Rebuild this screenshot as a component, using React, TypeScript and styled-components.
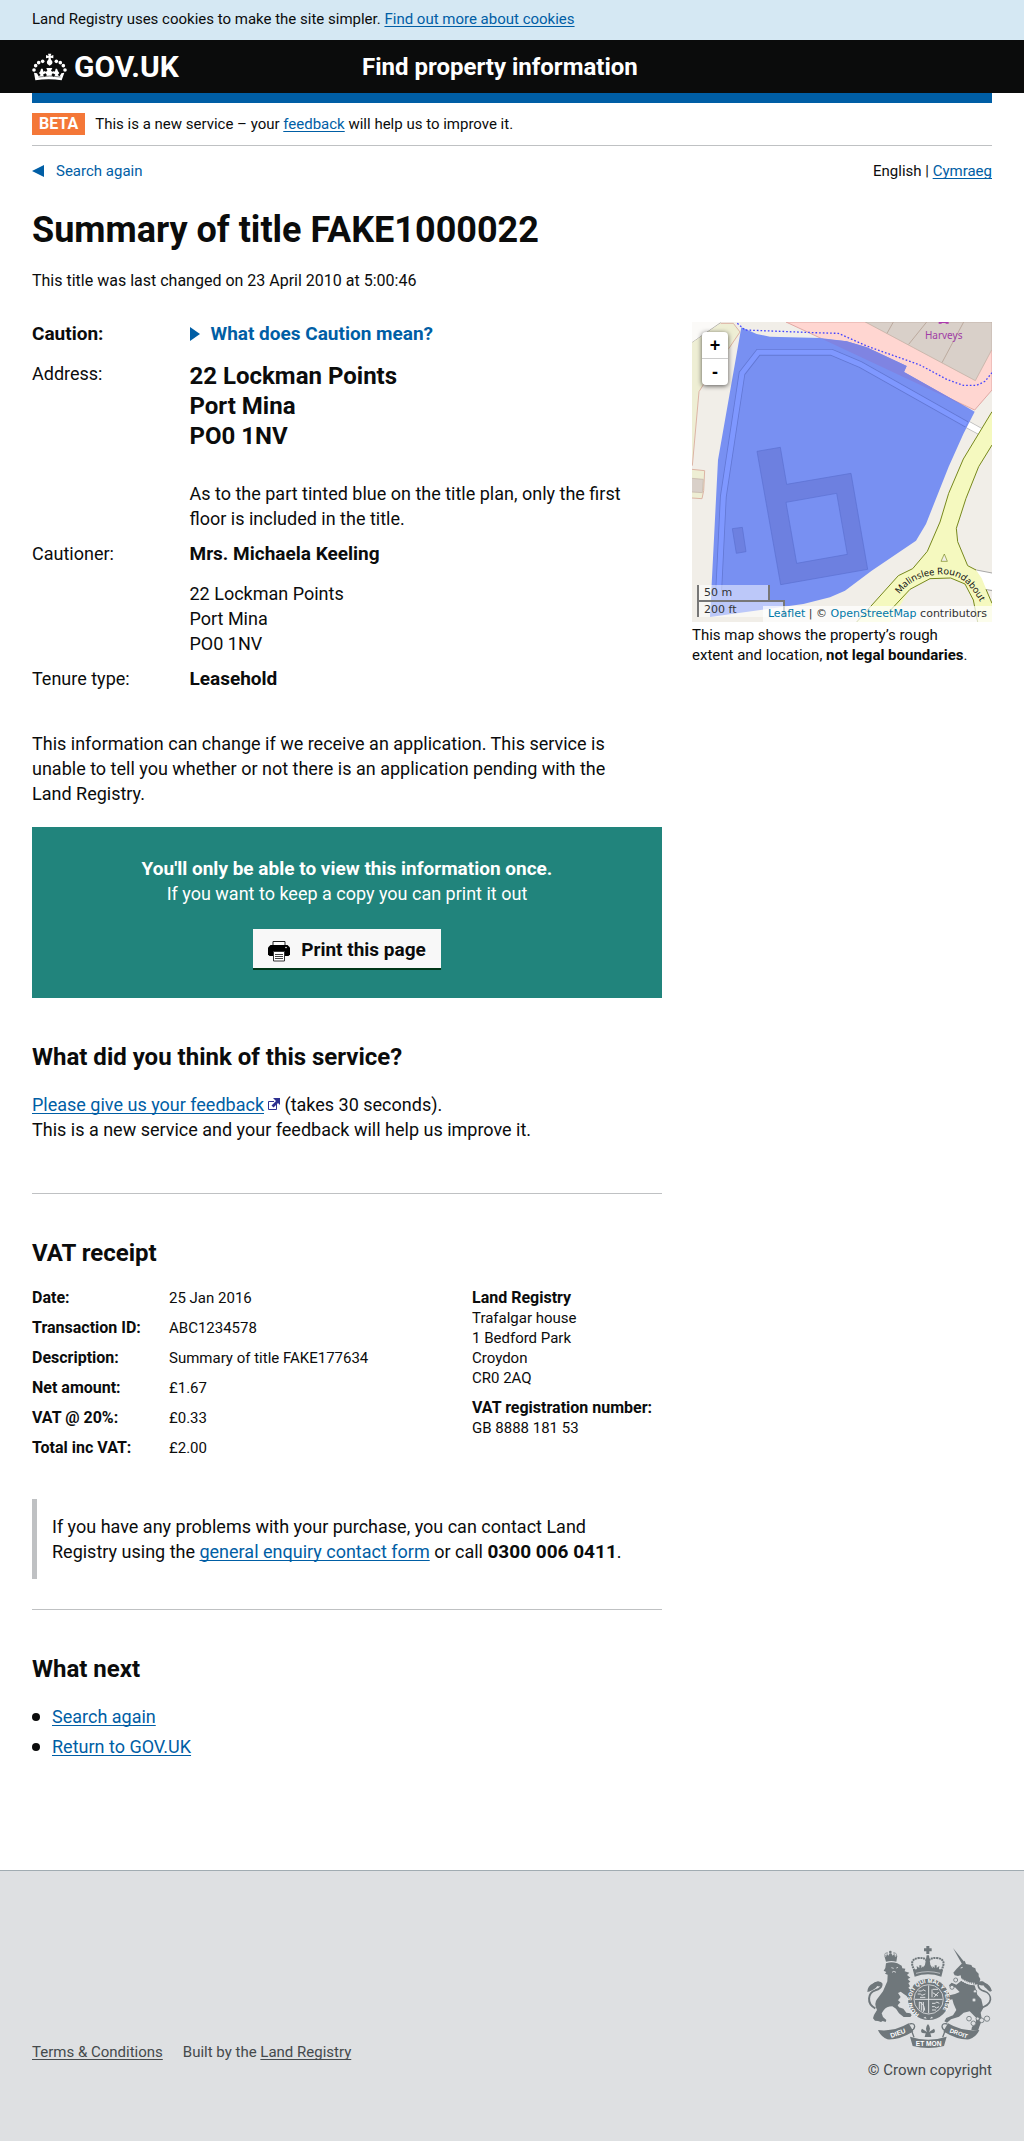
import React from 'react';
import styled, { createGlobalStyle, css } from 'styled-components';

const colour = {
  text: '#0b0c0c',
  link: '#005ea5',
  border: '#bfc1c3',
  footer: '#dee0e2',
  footerText: '#454a4c',
  green: '#21847c',
};

const Global = createGlobalStyle`
  *, *::before, *::after { box-sizing: border-box; }
  body {
    margin: 0;
    background: #fff;
    color: ${colour.text};
    font: 18px/25px Roboto, "Liberation Sans", Arial, sans-serif;
  }
  h1, h2, p, dl, dd, ul { margin: 0; padding: 0; }
`;

const Wrap = styled.div`
  max-width: 960px;
  margin: 0 auto;
  @media (max-width: 1023px) {
    margin: 0 32px;
  }
`;

const Link = styled.a`
  color: ${colour.link};
  text-decoration: underline;
  text-decoration-thickness: 1px;
  text-underline-offset: 2px;
  text-decoration-skip-ink: none;
`;

const small = css`
  font-size: 15px;
  line-height: 20px;
`;

/* Header */

const CookieBar = styled.div`
  background: #d5e8f3;
  padding: 9px 0 11px;
  ${small}
`;

const Header = styled.header`
  background: ${colour.text};
  color: #fff;
`;

const HeaderGrid = styled(Wrap)`
  display: grid;
  grid-template-columns: 1fr 2fr;
  column-gap: 15px;
  align-items: center;
  min-height: 53px;
`;

const Brand = styled.a`
  display: flex;
  align-items: center;
  gap: 7px;
  color: #fff;
  font-size: 30px;
  line-height: 30px;
  font-weight: 700;
  text-decoration: none;
`;

const ServiceName = styled.a`
  color: #fff;
  font-size: 24px;
  line-height: 30px;
  font-weight: 700;
  text-decoration: none;
`;

const PhaseBanner = styled.div`
  display: flex;
  align-items: center;
  gap: 10px;
  border-top: 10px solid ${colour.link};
  border-bottom: 1px solid ${colour.border};
  padding: 10px 0;
  ${small}
`;

const PhaseTag = styled.strong`
  background: #f47738;
  color: #fff;
  font-size: 16px;
  line-height: 22px;
  padding: 0 7px;
`;

const NavRow = styled.div`
  display: flex;
  justify-content: space-between;
  padding-top: 15px;
  ${small}
`;

const BackLink = styled.a`
  display: flex;
  align-items: center;
  gap: 12px;
  color: ${colour.link};
  text-decoration: none;
`;

/* Page content */

const Title = styled.h1`
  margin-top: 29px;
  font-size: 36px;
  line-height: 40px;
`;

const Changed = styled.p`
  margin-top: 21px;
  font-size: 16px;
  line-height: 20px;
`;

const Columns = styled.div`
  display: grid;
  grid-template-columns: minmax(0, 1fr) 300px;
  column-gap: 30px;
  align-items: start;
  margin-top: 30px;
`;

const SummaryList = styled.dl`
  display: grid;
  grid-template-columns: 1fr 3fr;
  row-gap: 10px;
`;

const Term = styled.dt<{ $bold?: boolean }>`
  font-size: ${(p) => (p.$bold ? 19 : 18)}px;
  font-weight: ${(p) => (p.$bold ? 700 : 400)};
`;

const Detail = styled.dd`
  && { padding-right: 20px; }
`;

const Strong = styled.strong`
  font-size: 19px;
`;

const Disclosure = styled.details`
  margin-bottom: 5px;
`;

const Summary = styled.summary`
  display: flex;
  align-items: center;
  gap: 11px;
  list-style: none;
  color: ${colour.link};
  font-size: 19px;
  font-weight: 700;
  cursor: pointer;
  &::-webkit-details-marker { display: none; }
`;

const PropertyAddress = styled.div`
  font-size: 24px;
  line-height: 30px;
  font-weight: 700;
  margin-bottom: 30px;
`;

const PostalAddress = styled.div`
  margin-top: 15px;
`;

const Notice = styled.p`
  && {
    margin-top: 40px;
    padding-right: 20px;
  }
`;

const PrintPanel = styled.div`
  display: flex;
  flex-direction: column;
  align-items: center;
  margin-top: 21px;
  padding: 29px 20px 28px;
  background: ${colour.green};
  color: #fff;
  text-align: center;
`;

const PrintButton = styled.button`
  display: flex;
  align-items: flex-end;
  gap: 11px;
  height: 41px;
  margin-top: 23px;
  padding: 0 15px 6px;
  border: 0;
  border-bottom: 2px solid #003618;
  background: #f8f8f8;
  color: ${colour.text};
  font: 700 19px/25px Roboto, "Liberation Sans", Arial, sans-serif;
  cursor: pointer;
`;

const Heading = styled.h2`
  && { margin: 44px 0 20px; }
  font-size: 24px;
  line-height: 30px;
`;

const Rule = styled.hr<{ $space: number }>`
  margin: ${(p) => p.$space}px 0 0;
  border: 0;
  border-top: 1px solid ${colour.border};
`;

const Receipt = styled.div`
  display: grid;
  grid-template-columns: minmax(0, 1fr) 190px;
  ${small}
`;

const ReceiptList = styled.dl`
  display: grid;
  grid-template-columns: 137px 1fr;
  row-gap: 10px;
`;

const ReceiptTerm = styled.dt`
  font-size: 16px;
  font-weight: 700;
`;

const ReceiptParty = styled.div`
  display: flex;
  flex-direction: column;
  gap: 10px;
`;

const PartyName = styled.strong`
  display: block;
  font-size: 16px;
`;

const Inset = styled.p`
  && {
    margin-top: 41px;
    padding: 15px;
  }
  border-left: 5px solid ${colour.border};
`;

const NextList = styled.ul`
  display: flex;
  flex-direction: column;
  gap: 5px;
  list-style: none;
  && { margin-bottom: 111px; }
  li {
    display: flex;
    align-items: center;
    gap: 12px;
  }
  li::before {
    content: '';
    width: 8px;
    height: 8px;
    border-radius: 50%;
    background: ${colour.text};
  }
`;

/* Map */

const MapColumn = styled.div`
  padding-top: 1px;
`;

const MapFrame = styled.div`
  position: relative;
  overflow: hidden;
  height: 300px;
  font: 11px/16px "DejaVu Sans", sans-serif;
  color: #333;
`;

const ZoomControl = styled.div`
  position: absolute;
  top: 10px;
  left: 10px;
  width: 26px;
  border-radius: 4px;
  background: #fff;
  box-shadow: 0 1px 5px rgba(0, 0, 0, 0.65);
`;

const ZoomButton = styled.button`
  display: block;
  width: 26px;
  height: 26px;
  padding: 0;
  border: 0;
  background: none;
  color: #000;
  font: 700 18px/26px "Liberation Sans", sans-serif;
  cursor: pointer;
  & + & {
    height: 27px;
    border-top: 1px solid #ccc;
  }
`;

const Scale = styled.div`
  position: absolute;
  left: 5px;
  bottom: 5px;
`;

const ScaleBar = styled.div<{ $width: number; $upper?: boolean }>`
  width: ${(p) => p.$width}px;
  height: 17px;
  padding-left: 5px;
  border: 2px solid #777;
  ${(p) => (p.$upper ? 'border-top: 0; margin-bottom: -2px;' : 'border-bottom: 0;')}
  background: rgba(255, 255, 255, 0.5);
`;

const Attribution = styled.div`
  position: absolute;
  right: 0;
  bottom: 0;
  padding: 0 5px;
  background: rgba(255, 255, 255, 0.7);
  white-space: nowrap;
  a { color: #0078a8; text-decoration: none; }
`;

const Caption = styled.p`
  && {
    margin-top: 3px;
    padding-right: 15px;
  }
  ${small}
`;

/* Footer */

const Footer = styled.footer`
  border-top: 1px solid #a1acb2;
  background: ${colour.footer};
  color: ${colour.footerText};
  padding: 75px 0 61px;
  ${small}
  a { color: ${colour.footerText}; }
`;

const FooterRow = styled(Wrap)`
  display: flex;
  justify-content: space-between;
  align-items: flex-end;
`;

const FooterLinks = styled.div`
  display: flex;
  gap: 20px;
  padding-bottom: 18px;
`;

const Copyright = styled.a`
  display: flex;
  flex-direction: column;
  align-items: flex-end;
  gap: 12px;
  text-decoration: none;
`;

const Block = styled.svg`
  display: block;
  flex: none;
`;

const ExternalMark = styled.svg`
  margin-left: 3px;
`;

const CrownIcon = () => (
  <Block width="35" height="30" viewBox="6 20 105 84" fill="#fff" aria-hidden="true">
    {[[12, 71], [17, 58], [26, 49], [38, 45], [79, 45], [91, 49], [100, 58], [105, 71]].map(([x, y]) => (
      <circle key={x} cx={x} cy={y} r="5.4" />
    ))}
    <path d="M54 22h10l-2 7 8-3v10l-8-2 1 6q7 5 3 13l-7 5-7-5q-4-8 3-13l1-6-8 2V26l8 3Z" />
    <path d="M12 79l9 2 5 9 6-4-5-6 4-5 2-8 5 0 2 8 4 5-5 6 5 5 7-4-4-6-5 2v-9l6 2 4-3-3-8h18l-4 8 4 3 6-2v9l-5-2-4 6 7 4 5-5-5-6 4-5 2-8h4l3 8 4 5-5 6 6 4 5-9 9-2-8 23q-39-7-79 0Z" />
    <path d="M26 92q33-6 66 0" stroke="#0b0c0c" strokeWidth="1.5" fill="none" />
  </Block>
);

const PrinterIcon = () => (
  <Block width="22" height="22" viewBox="0 0 22 22" aria-hidden="true">
    <path d="M5 6V1.500h12V6" fill="#fff" stroke="#222" />
    <path d="M2.500 5h17L22 7.500v7L20.500 16H1.500L0 14.500v-7Z" fill="#000" />
    <path d="M5.500 11.500h11v9.500h-11Z" fill="#fff" stroke="#333" />
    <path d="M7 14.500h8M7 16.500h8M7 18.500h8" stroke="#444" />
    <circle cx="18" cy="7.500" r=".8" fill="#fff" />
  </Block>
);

const ExternalIcon = () => (
  <ExternalMark width="13" height="13" viewBox="0 0 13 13" aria-hidden="true">
    <path d="M7 3.500H1.500v8h8V6" fill="none" stroke="#2e3191" />
    <path d="M6 0h7v7l-2-2-4.500 4.500-2-2L9 3Z" fill="#2e3191" />
  </ExternalMark>
);

const Crest = () => (
  <Block width="125" height="102" viewBox="9 18 375 306" fill="#6f777b" aria-hidden="true">
    {/* lion */}
    <path d="M61 47l5 3 3-9 4 6 4-7 5 0 4 7 5-6 2 9 7-3-3 18q-14-4-31 0Z" />
    <circle cx="79" cy="36" r="4" />
    <path d="M64 48q-6-10 9-9M96 48q5-10-9-9" fill="none" stroke="#6f777b" strokeWidth="3" strokeDasharray="4 2" />
    <path d="M66 70q16-6 34 0l13 7 2 8 9 1-2 8 14 4-7 7 10 8-8 4 8 8-6 4 5 10-5 4 9 9 10 26-8 1 2 9-9-5-9-15-18-13-8 4 8 12-8 10 7 6-8 9 4 6 13 4 9 12 12 2 4 6-4 5-20 0-14-11-9-14-11-7q-18 0-26 12l-6 9 4 11 10 9-2 6-9-3-5 3-9-3-9-1-6-7 3-10 9-15q-10-20 0-32l18-24 13-30 1-20-8-3 4-5-8-4 5-8Z" />
    <path d="M82 83l7 2M97 84l5-2M84 97q5-6 12 0" stroke="#dee0e2" strokeWidth="2.500" fill="none" />
    <path d="M34 205C6 190 12 158 34 151C58 144 58 124 38 128C24 130 26 148 14 152" fill="none" stroke="#6f777b" strokeWidth="6" />
    <path d="M28 130q16-12 28 2-6 10-16 6-8 12-30 18 0-18 18-26Z" />
    {/* unicorn */}
    <path d="M267 24l34 42-7 6Z" />
    <path d="M296 68l6-6 4 10 16 3 3 6 9 4 2 8 8 8 0 8 5 8-4 15-14 2-25-8-14-10-2-10-8 2-10-2-4-8 10-12Z" />
    <path d="M290 84l6-2" stroke="#dee0e2" strokeWidth="3" />
    <path d="M292 122q18 12 40 14l8 28 12 14 6 26-8 14 4 22-8 20-4 12-20-2 2-10 10-6 3-20-20-20-18 4-14 12-24 8-12 10-8-4 6-10 20-8 10-16-8-18-4-14-18 4-12-12 6-14 12 0 4 10 16-4 14-6-14-14-14 2-4-8 8-8 14 6Z" />
    <path d="M286 114q20 17 46 18" stroke="#dee0e2" strokeWidth="7" strokeDasharray="4 2" fill="none" />
    <path d="M344 205C392 196 384 162 362 154C336 146 338 124 356 128C370 132 366 148 380 154" fill="none" stroke="#6f777b" strokeWidth="5" />
    <path d="M340 128q14-8 22 0 18 6 22 26-18-6-26-18-12 2-18-8Z" />
    <g fill="#dee0e2" stroke="#6f777b" strokeWidth="2.500">
      <circle cx="264" cy="142" r="6" /><circle cx="275" cy="120" r="6" /><circle cx="333" cy="154" r="5" />
      <circle cx="330" cy="180" r="6" /><circle cx="315" cy="236" r="7" /><circle cx="328" cy="250" r="7" />
      <circle cx="353" cy="241" r="7" /><circle cx="369" cy="236" r="8" /><circle cx="341" cy="236" r="5" />
    </g>
    {/* royal crown */}
    <path d="M187 18h9v7h7v9h-7v8h-9v-8h-7v-9h7Z" />
    <path d="M152 92q-20-34 12-38 20-2 27 12 8-14 28-12 32 4 12 38" fill="none" stroke="#6f777b" strokeWidth="6" strokeDasharray="6 2" />
    <path d="M188 46h7l4 28 6 10-6 10h-16l-6-10 6-10ZM158 78l8 6 0-8 6 0 0 8 6-6v18h-18ZM206 78l6 6 0-8 6 0 0 8 8-6-2 18h-18Z" />
    <path d="M147 90q44-14 90 0l-5 20q-40-14-80 0Z" />
    <path d="M156 100q36-10 72 0" stroke="#dee0e2" strokeWidth="2" fill="none" />
    {/* garter and shield */}
    <circle cx="194" cy="178" r="62" />
    <circle cx="194" cy="178" r="44" fill="none" stroke="#dee0e2" strokeWidth="2.500" />
    <path id="garter" d="M166 222a51 51 0 1 1 56 0" fill="none" />
    <text fontFamily="Liberation Sans, sans-serif" fontWeight="700" fontSize="17" fill="#fff">
      <textPath href="#garter">HONI SOIT QUI MAL Y PENSE</textPath>
    </text>
    <path d="M194 136v84M152 178h84" stroke="#dee0e2" strokeWidth="3" />
    <g stroke="#dee0e2" strokeWidth="3" fill="none">
      <path d="M163 153h10l4-4 8 4M161 162h8l5 4 10-4M168 172h16M204 148v24M206 148h16M206 158l16 10M210 172l14-16" />
      <path d="M166 186v22M166 186q16 6 16 26M172 186v26M178 186v30M204 190h10l4-4 8 4M204 200h8l5 4 8-4M204 210h12" />
    </g>
    <path d="M178 234l6-4 4 6ZM208 234l-6-4-4 6Z" fill="#dee0e2" />
    {/* motto scroll */}
    <path d="M42 270q48 6 92-20l14 24q-40 26-78 24-20-8-28-28Z" />
    <path d="M346 270q-50 6-94-20l-14 24q40 26 78 24 22-8 30-28Z" />
    <path d="M138 290q54 18 110 0l-8 28q-46 12-94 0Z" />
    <path d="M136 252q16-4 16 8-2 10-10 10l8 22M250 252q-16-4-16 8 2 10 10 10l-8 22" stroke="#6f777b" strokeWidth="4" fill="none" />
    <path d="M192 252q10 11 3 24l15-10q8 12-6 14h-5l3 11h-20l3-11h-5q-14-2-6-14l15 10q-7-13 3-24Z" />
    <g fontFamily="Liberation Sans, sans-serif" fontWeight="700" fontSize="20" fill="#fff" textAnchor="middle">
      <text transform="translate(104 286) rotate(-20)">DIEU</text>
      <text x="194" y="317">ET MON</text>
      <text transform="translate(282 286) rotate(20)" fontSize="18">DROIT</text>
    </g>
  </Block>
);

const MapDrawing = () => (
  <Block width="100%" height="300" viewBox="36 36 900 900" preserveAspectRatio="xMidYMid slice" role="img" aria-label="Map of the property">
    <path fill="#f1eee8" d="M36 36h900v900H36Z" />
    <path fill="#fbfaf8" d="M36 36h86L36 98Z" />
    <path d="M36 98L122 38" stroke="#b5b3ae" strokeWidth="3" />
    <path d="M36 98L122 40h38l20 26-30 48-75 102-18 29-21 220Z" fill="#eeeed4" />
    <path d="M122 40h38l20 26-34 50M75 216l-18 29-20 222" fill="none" stroke="#dcb4a4" strokeWidth="3" />
    <path d="M36 478l38 4-3 60-5 24-30-2" fill="#eeeed4" stroke="#dcb4a4" strokeWidth="3" />
    <path d="M36 505l34 3-3 40-31-2" fill="#d9d0c9" stroke="#c4b4a8" strokeWidth="2" />
    <path d="M318 36L884 300l52-60V36Z" fill="#ffd6d1" stroke="#e0a8a4" strokeWidth="3" />
    <path d="M556 36L886 212l50-94V36Z" fill="#d9d0c9" stroke="#bcaa9e" strokeWidth="2" />
    <path d="M640 36l-19 34M740 36l-54 67M851 36l-65 122" stroke="#bcaa9e" strokeWidth="3" />
    <path d="M862 343l42 23" stroke="#bbb" strokeWidth="23" />
    <path d="M860 342l46 25" stroke="#fff" strokeWidth="18" />
    <path d="M888 780l48 10v48l-18 0Z" fill="#fff" />
    <path d="M884 779l52 10M916 838l20 4" stroke="#999" strokeWidth="2.500" />
    {/* main road and roundabout */}
    <path
      d="M936 305L850 447 806 550 780 636 742 724 698 776 655 797 530 936H632L655 895 690 838 750 806 812 804 855 822 880 870 893 936H936V880L905 805 888 780 863 767 833 695 829 655 858 565 896 470 936 405Z"
      fill="#f5f9bf"
    />
    <path
      d="M936 305L850 447 806 550 780 636 742 724 698 776 655 797 530 936M632 900L690 838 750 806 812 804 855 822 880 870 893 936M936 405L896 470 858 565 829 655 833 695 863 767 888 780M918 838L936 880"
      fill="none" stroke="#77881c" strokeWidth="3"
    />
    <path d="M783 754l10-22 9 22Z" fill="#f1eee8" stroke="#77881c" strokeWidth="2" />
    {/* title extent */}
    <path
      d="M184 52L230 72 270 80 420 84 500 94 560 112 680 168 672 186 884 305 850 372 806 470 738 642 708 692 575 782 495 842 450 862 370 882 90 921 114 450Z"
      fill="#7890f2"
    />
    <path d="M425 86L500 94 560 112 680 168 672 186 884 305 800 262Z" fill="#7f84e2" />
    <path d="M116 845L130 560 186 190 235 127H455L540 163 860 343" fill="none" stroke="#6378d4" strokeWidth="20" />
    <path d="M116 845L130 560 186 190 235 127H455L540 163 860 343" fill="none" stroke="#7f98ff" strokeWidth="15" />
    <path
      d="M231 424L301 412 320 523 513 490 563 778 302 824ZM318 577L350 760 502 733 470 550Z"
      fill="#6d80e0" fillRule="evenodd" stroke="#5b6fd0" strokeWidth="2"
    />
    <path d="M157 656l30-4 11 73-29 5Z" fill="#6d80e0" stroke="#5b6fd0" strokeWidth="2" />
    <path
      d="M172 40L195 60 300 64 400 68 475 70 560 108 720 165 800 208 850 226 890 226 915 214 936 188"
      fill="none" stroke="#4444ff" strokeWidth="4" strokeDasharray="5 6"
    />
    <path d="M776 36h30v5h-8l-2-2h-10l-2 2h-8Z" fill="#ac39ac" />
    <text x="791" y="86" textAnchor="middle" fontFamily="Noto Sans, sans-serif" fontSize="30" fill="#a03ca6">Harveys</text>
    <path id="roundabout" d="M658 853C688 813 728 795 788 793C836 793 868 816 906 885" fill="none" />
    <text fontFamily="Noto Sans, sans-serif" fontSize="28" fill="#111">
      <textPath href="#roundabout">Malinslee Roundabout</textPath>
    </text>
  </Block>
);

const receiptRows = [
  ['Date:', '25 Jan 2016'],
  ['Transaction ID:', 'ABC1234578'],
  ['Description:', 'Summary of title FAKE177634'],
  ['Net amount:', '£1.67'],
  ['VAT @ 20%:', '£0.33'],
  ['Total inc VAT:', '£2.00'],
];

export default function App() {
  return (
    <>
      <Global />
      <CookieBar>
        <Wrap>
          Land Registry uses cookies to make the site simpler. <Link href="#cookies">Find out more about cookies</Link>
        </Wrap>
      </CookieBar>
      <Header>
        <HeaderGrid>
          <Brand href="#govuk"><CrownIcon />GOV.UK</Brand>
          <ServiceName href="#service">Find property information</ServiceName>
        </HeaderGrid>
      </Header>
      <Wrap as="main">
        <PhaseBanner>
          <PhaseTag>BETA</PhaseTag>
          <span>This is a new service – your <Link href="#feedback">feedback</Link> will help us to improve it.</span>
        </PhaseBanner>
        <NavRow>
          <BackLink href="#search">
            <Block width="12" height="12" viewBox="0 0 12 12" aria-hidden="true"><path d="M0 6L12 0v12Z" fill={colour.link} /></Block>
            Search again
          </BackLink>
          <span>English | <Link href="#cymraeg">Cymraeg</Link></span>
        </NavRow>
        <Title>Summary of title FAKE1000022</Title>
        <Changed>This title was last changed on 23 April 2010 at 5:00:46</Changed>
        <Columns>
          <div>
            <SummaryList>
              <Term $bold>Caution:</Term>
              <Detail>
                <Disclosure>
                  <Summary>
                    <Block width="10" height="14" viewBox="0 0 10 14" aria-hidden="true"><path d="M0 0L10 7 0 14Z" fill={colour.link} /></Block>
                    What does Caution mean?
                  </Summary>
                </Disclosure>
              </Detail>
              <Term>Address:</Term>
              <Detail>
                <PropertyAddress>22 Lockman Points<br />Port Mina<br />PO0 1NV</PropertyAddress>
                <p>As to the part tinted blue on the title plan, only the first floor is included in the title.</p>
              </Detail>
              <Term>Cautioner:</Term>
              <Detail>
                <Strong>Mrs. Michaela Keeling</Strong>
                <PostalAddress>22 Lockman Points<br />Port Mina<br />PO0 1NV</PostalAddress>
              </Detail>
              <Term>Tenure type:</Term>
              <Detail><Strong>Leasehold</Strong></Detail>
            </SummaryList>
            <Notice>
              This information can change if we receive an application. This service is unable to tell you whether or
              not there is an application pending with the Land Registry.
            </Notice>
            <PrintPanel>
              <Strong>You'll only be able to view this information once.</Strong>
              <span>If you want to keep a copy you can print it out</span>
              <PrintButton type="button"><PrinterIcon />Print this page</PrintButton>
            </PrintPanel>
            <Heading>What did you think of this service?</Heading>
            <p>
              <Link href="#survey">Please give us your feedback<ExternalIcon /></Link> (takes 30 seconds).
              <br />
              This is a new service and your feedback will help us improve it.
            </p>
            <Rule $space={51} />
            <Heading>VAT receipt</Heading>
            <Receipt>
              <ReceiptList>
                {receiptRows.map(([label, value]) => (
                  <React.Fragment key={label}>
                    <ReceiptTerm>{label}</ReceiptTerm>
                    <dd>{value}</dd>
                  </React.Fragment>
                ))}
              </ReceiptList>
              <ReceiptParty>
                <div>
                  <PartyName>Land Registry</PartyName>
                  Trafalgar house<br />1 Bedford Park<br />Croydon<br />CR0 2AQ
                </div>
                <div>
                  <PartyName>VAT registration number:</PartyName>
                  GB 8888 181 53
                </div>
              </ReceiptParty>
            </Receipt>
            <Inset>
              If you have any problems with your purchase, you can contact Land Registry using the{' '}
              <Link href="#enquiry">general enquiry contact form</Link> or call <Strong>0300 006 0411</Strong>.
            </Inset>
            <Rule $space={30} />
            <Heading>What next</Heading>
            <NextList>
              <li><Link href="#search">Search again</Link></li>
              <li><Link href="#govuk">Return to GOV.UK</Link></li>
            </NextList>
          </div>
          <MapColumn>
            <MapFrame>
              <MapDrawing />
              <ZoomControl>
                <ZoomButton type="button" title="Zoom in">+</ZoomButton>
                <ZoomButton type="button" title="Zoom out">-</ZoomButton>
              </ZoomControl>
              <Scale>
                <ScaleBar $width={73} $upper>50 m</ScaleBar>
                <ScaleBar $width={88}>200 ft</ScaleBar>
              </Scale>
              <Attribution>
                <a href="#leaflet">Leaflet</a> | © <a href="#osm">OpenStreetMap</a> contributors
              </Attribution>
            </MapFrame>
            <Caption>This map shows the property’s rough extent and location, <strong>not legal boundaries</strong>.</Caption>
          </MapColumn>
        </Columns>
      </Wrap>
      <Footer>
        <FooterRow>
          <FooterLinks>
            <Link href="#terms">Terms &amp; Conditions</Link>
            <span>Built by the <Link href="#registry">Land Registry</Link></span>
          </FooterLinks>
          <Copyright href="#copyright"><Crest />© Crown copyright</Copyright>
        </FooterRow>
      </Footer>
    </>
  );
}
